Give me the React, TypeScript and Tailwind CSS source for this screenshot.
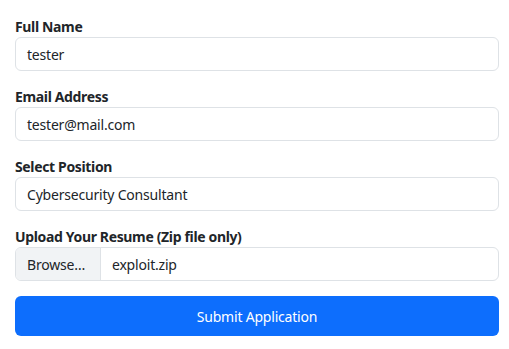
import React from "react";

const Label = ({ children }: { children: React.ReactNode }) => (
  <label className="block text-[14px] leading-[21px] font-bold text-[#212529] tracking-[-0.35px]">{children}</label>
);

const Field = ({ label, value }: { label: string; value: string }) => (
  <div className="mb-[15px]">
    <Label>{label}</Label>
    <div className="h-[34px] rounded-[6px] border border-[#dee2e6] bg-white px-[11px] flex items-center text-[14px] text-[#212529] tracking-[-0.2px]">
      {value}
    </div>
  </div>
);

export default function App() {
  return (
    <div
      className="w-[509px] h-[349px] bg-white pl-[15px] pr-[10px] pt-[16px]"
      style={{ fontFamily: '"Noto Sans", sans-serif' }}
    >
      <Field label="Full Name" value="tester" />
      <Field label="Email Address" value="tester@mail.com" />
      <Field label="Select Position" value="Cybersecurity Consultant" />
      <div className="mb-[15px]">
        <Label>Upload Your Resume (Zip file only)</Label>
        <div className="h-[34px] rounded-[6px] border border-[#dee2e6] bg-white flex items-stretch text-[14px] text-[#212529] tracking-[-0.2px] overflow-hidden">
          <div className="w-[85px] bg-[#f1f3f5] border-r border-[#dee2e6] flex items-center px-[11px]">Browse…</div>
          <div className="flex items-center px-[11px]">exploit.zip</div>
        </div>
      </div>
      <button className="w-full h-[40px] rounded-[6px] bg-[#0d6efd] text-white text-[14px] tracking-[-0.2px] pt-[1px]">
        Submit Application
      </button>
    </div>
  );
}
